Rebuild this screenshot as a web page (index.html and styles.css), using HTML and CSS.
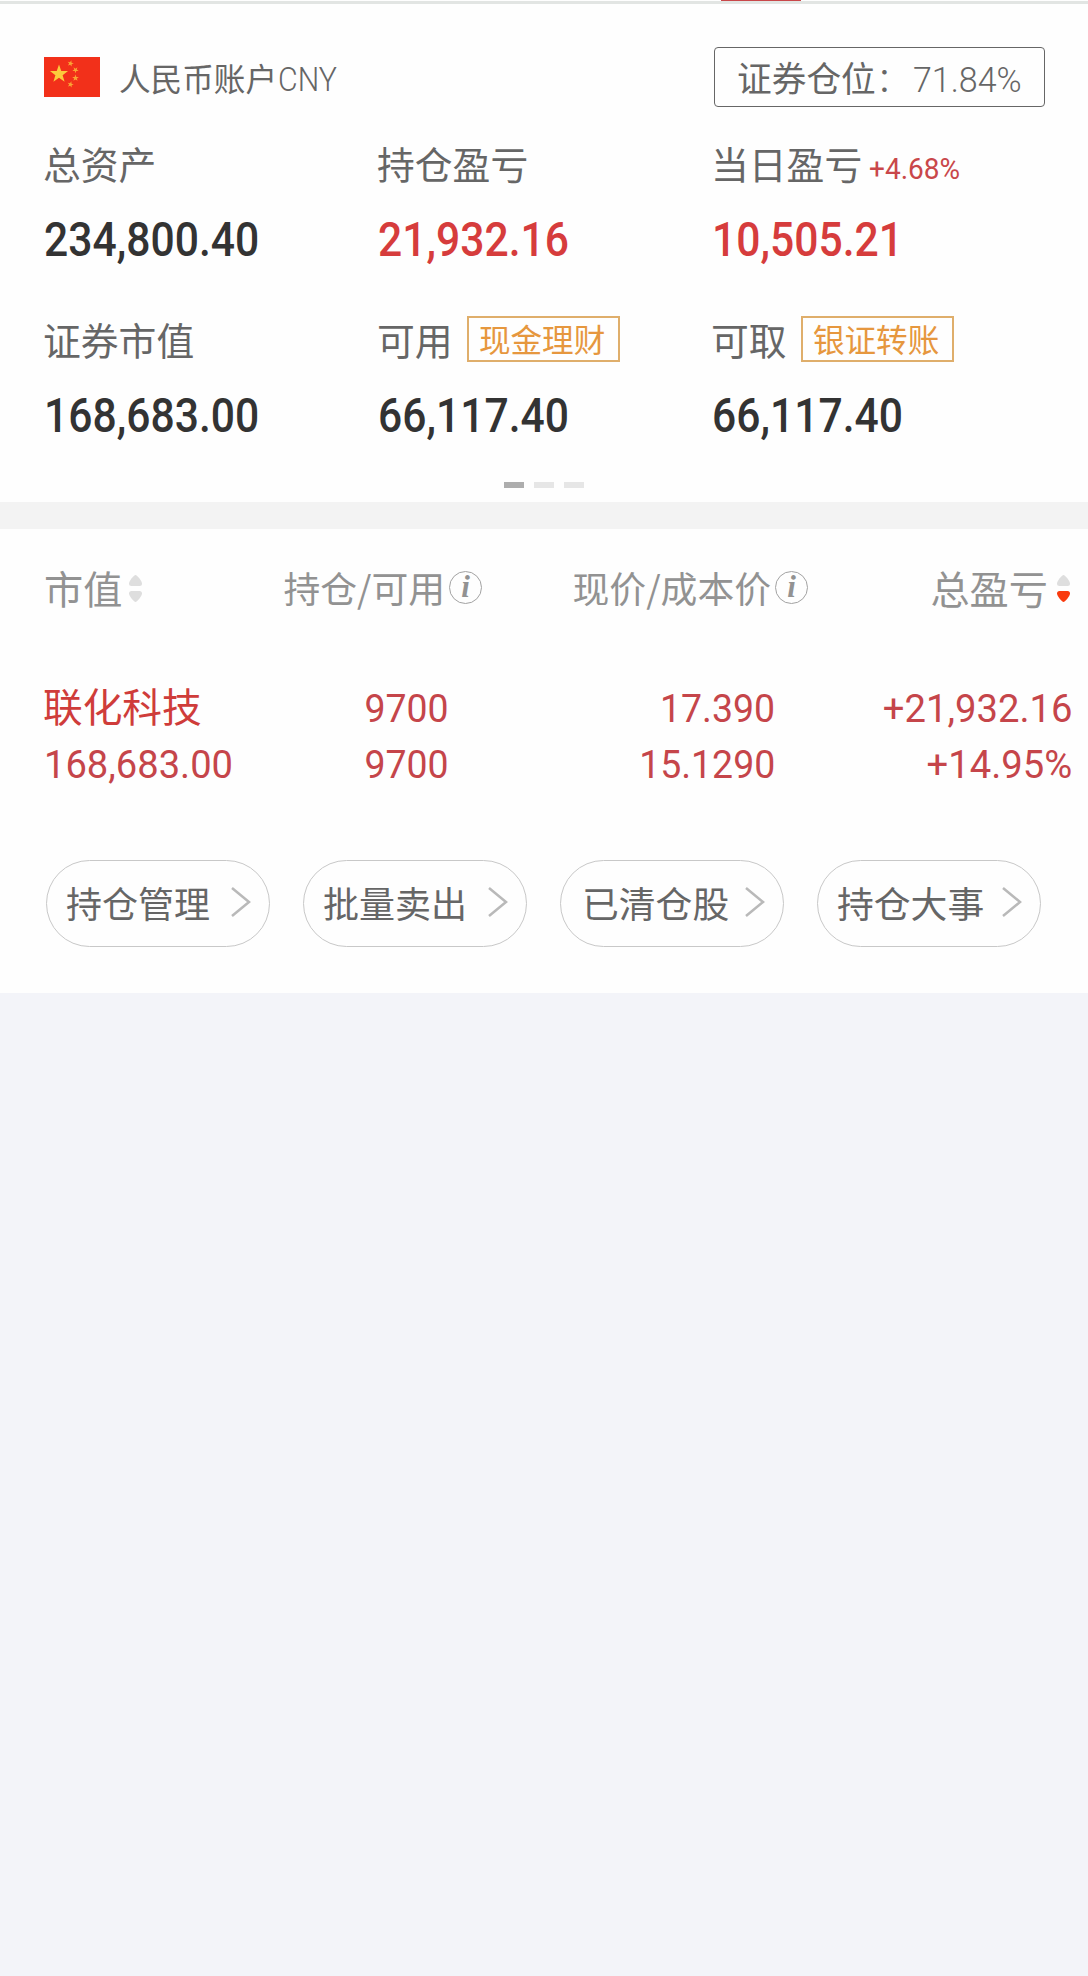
FILE: index.html
```html
<!DOCTYPE html>
<html lang="zh-CN">
<head>
<meta charset="utf-8">
<title>持仓</title>
<link rel="stylesheet" href="styles.css">
</head>
<body>
<div class="tabline"><span class="tabline-active"></span></div>

<section class="account">
  <header class="account-head">
    <svg class="flag" viewBox="0 0 56 40">
      <defs><path id="star" d="M0-10 2.4-3.1 9.5-3.1 3.8 1.2 5.9 8.1 0 4-5.9 8.1-3.8 1.2-9.5-3.1-2.4-3.1Z"/></defs>
      <rect width="56" height="40" fill="#f2301a"/>
      <g fill="#fccb3c">
        <use href="#star" transform="translate(15 17) scale(.95)"/>
        <g fill="#f9a535">
          <use href="#star" transform="translate(26.5 6.500) rotate(15) scale(.33)"/>
          <use href="#star" transform="translate(31.5 13) rotate(35) scale(.33)"/>
          <use href="#star" transform="translate(31.5 21) scale(.35)"/>
          <use href="#star" transform="translate(26.500 27.500) rotate(15) scale(.33)"/>
        </g>
      </g>
    </svg>
    <span class="account-name">人民币账户<span class="num cny">CNY</span></span>
    <span class="position">证券仓位<span class="colon">：</span><span class="num pct">71.84%</span></span>
  </header>

  <div class="stats">
    <div class="stat">
      <div class="label">总资产</div>
      <div class="value"><span class="num">234,800.40</span></div>
    </div>
    <div class="stat">
      <div class="label">持仓盈亏</div>
      <div class="value up"><span class="num">21,932.16</span></div>
    </div>
    <div class="stat">
      <div class="label">当日盈亏<span class="num change">+4.68%</span></div>
      <div class="value up"><span class="num">10,505.21</span></div>
    </div>
    <div class="stat">
      <div class="label">证券市值</div>
      <div class="value"><span class="num">168,683.00</span></div>
    </div>
    <div class="stat">
      <div class="label">可用<span class="tag">现金理财</span></div>
      <div class="value"><span class="num">66,117.40</span></div>
    </div>
    <div class="stat">
      <div class="label">可取<span class="tag">银证转账</span></div>
      <div class="value"><span class="num">66,117.40</span></div>
    </div>
  </div>

  <div class="pager"><i class="on"></i><i></i><i></i></div>
</section>

<section class="holdings">
  <div class="row head">
    <div class="c1">市值<svg class="sort" viewBox="0 0 13 28"><path d="M6.500 0C8 0 13 6 13 8.500Q13 11 10.500 11H2.500Q0 11 0 8.500C0 6 5 0 6.500 0Z" fill="#dedede"/><path d="M6.500 27C8 27 13 21 13 18.500Q13 16 10.500 16H2.500Q0 16 0 18.500C0 21 5 27 6.500 27Z" fill="#dedede"/></svg></div>
    <div class="c2">持仓/可用<span class="info">i</span></div>
    <div class="c3">现价/成本价<span class="info">i</span></div>
    <div class="c4">总盈亏<svg class="sort" viewBox="0 0 13 28"><path d="M6.500 0C8 0 13 6 13 8.500Q13 11 10.500 11H2.500Q0 11 0 8.500C0 6 5 0 6.500 0Z" fill="#dedede"/><path d="M6.500 27C8 27 13 21 13 18.500Q13 16 10.500 16H2.500Q0 16 0 18.500C0 21 5 27 6.500 27Z" fill="#f93a0e"/></svg></div>
  </div>

  <div class="row item">
    <div class="c1"><span class="name">联化科技</span><span class="num wide">168,683.00</span></div>
    <div class="c2"><span class="num">9700</span><span class="num">9700</span></div>
    <div class="c3"><span class="num">17.390</span><span class="num">15.1290</span></div>
    <div class="c4"><span class="num">+21,932.16</span><span class="num">+14.95%</span></div>
  </div>

  <nav class="actions">
    <a class="pill">持仓管理<svg class="chev" viewBox="0 0 20 30"><path d="M1 1 18 15 1 29"/></svg></a>
    <a class="pill">批量卖出<svg class="chev" viewBox="0 0 20 30"><path d="M1 1 18 15 1 29"/></svg></a>
    <a class="pill large">已清仓股<svg class="chev" viewBox="0 0 20 30"><path d="M1 1 18 15 1 29"/></svg></a>
    <a class="pill large">持仓大事<svg class="chev" viewBox="0 0 20 30"><path d="M1 1 18 15 1 29"/></svg></a>
  </nav>
</section>
</body>
</html>
```
FILE: styles.css
```css
* { box-sizing: border-box; }

body {
  margin: 0;
  min-height: 1976px;
  background: #f3f4f9;
  color: #666;
  font-family: "Noto Sans CJK SC", sans-serif;
  white-space: nowrap;
}

.num {
  display: inline-block;
  font-family: Roboto, "Noto Sans CJK SC", sans-serif;
  transform-origin: left center;
}

.tabline {
  height: 4px;
  padding-left: 721px;
  background: linear-gradient(#fefefe 1px, #e2e5e3 1px);
}
.tabline-active {
  display: block;
  width: 80px;
  height: 1px;
  background: #c9474a;
}

/* Account summary */
.account {
  height: 498px;
  padding: 43px 43px 0 44px;
  background: #fefefe;
}
.account-head {
  display: flex;
  align-items: center;
  height: 60px;
}
.flag { width: 56px; height: 40px; }
.account-name {
  margin-left: 19px;
  font-size: 31.6px;
  line-height: 58px;
}
.cny {
  margin-left: 1px;
  font-size: 32.4px;
  font-weight: 300;
  line-height: 40px;
  transform: scaleX(.935);
}
.position {
  width: 331px;
  height: 60px;
  margin-left: auto;
  padding-left: 22px;
  border: 1px solid #666;
  border-radius: 4px;
  font-size: 34.700px;
  line-height: 58px;
}
.colon {
  display: inline-block;
  width: 35px;
  font-weight: 300;
}
.pct {
  margin-left: 2px;
  font-size: 35.2px;
  font-weight: 300;
  line-height: 40px;
  transform: scaleX(.965);
}

.stats {
  display: grid;
  grid-template-columns: repeat(3, 334px);
  row-gap: 53px;
  margin: 34px 0 0 -1px;
}
.label {
  display: flex;
  align-items: center;
  height: 44px;
  font-size: 37.8px;
  line-height: 44px;
}
.change {
  margin: 11px 0 0 7px;
  color: #c9474a;
  font-size: 29.5px;
  line-height: 34px;
  transform: scaleX(.95);
}
.tag {
  width: 153px;
  height: 46px;
  margin-left: 14px;
  padding-right: 2px;
  border: 2px solid #dfae6b;
  color: #e6973e;
  font-size: 31.6px;
  line-height: 40px;
  text-align: center;
}
.value {
  height: 56px;
  margin-top: 23px;
  color: #333;
  font-size: 47.8px;
  font-weight: 500;
  line-height: 56px;
}
.value .num { transform: translateX(1px) scaleX(.892); }
.value.up { color: #d63c3c; }

.pager {
  display: flex;
  justify-content: center;
  gap: 10px;
  margin: 42px 2px 0 0;
}
.pager i {
  width: 20px;
  height: 6px;
  background: #e6e6e6;
}
.pager .on { background: #adadad; }

/* Holdings table */
.holdings {
  height: 491px;
  padding-top: 36px;
  border-top: 27px solid #f3f3f3;
  background: #fefefe;
}
.row {
  display: grid;
  grid-template-columns: 240px 242px 326px 262px;
}
.head {
  height: 44px;
  color: #929292;
  font-size: 36.8px;
  line-height: 44px;
}
.head > div {
  display: flex;
  justify-content: flex-end;
  align-items: center;
}
.head .c1 {
  justify-content: flex-start;
  padding-left: 44px;
}
.head .c1, .head .c4 { font-size: 39.2px; }
.sort {
  width: 13px;
  height: 28px;
  margin: 3px 0 0 7px;
}
.head .c4 .sort { margin-left: 9px; }
.info {
  width: 33px;
  height: 33px;
  margin: 0 0 0 4px;
  border: 1.500px solid #a2a2a2;
  border-radius: 50%;
  font: italic bold 31px/29px "Liberation Serif", serif;
  text-align: center;
}

.item {
  grid-template-columns: 240px 209px 326px 297px;
  margin-top: 72px;
  color: #c5454a;
  font-size: 39.4px;
}
.item > div {
  display: flex;
  flex-direction: column;
  align-items: flex-end;
}
.item .c1 {
  align-items: flex-start;
  padding-left: 44px;
}
.item .num, .name {
  height: 56px;
  line-height: 56px;
}
.item .num {
  transform: scaleX(.95);
  transform-origin: right center;
}
.item .c4 .num { transform: scaleX(.97); }
.name {
  margin: -4px 0 4px -1px;
  color: #cf3c3a;
  font-size: 39.700px;
}
.item .c1 .wide {
  transform: scaleX(.968);
  transform-origin: left center;
}

.actions {
  display: flex;
  gap: 33px;
  margin-top: 67px;
  padding-left: 46px;
}
.pill {
  display: flex;
  align-items: center;
  justify-content: space-between;
  width: 224px;
  height: 87px;
  padding: 0 18px 4px 19px;
  border: 1px solid #c8c8c8;
  border-radius: 44px;
  font-size: 36px;
}
.pill.large { padding-left: 21px; font-size: 36.8px; }
.pill.large:last-child { padding-left: 19px; }
.chev {
  width: 20px;
  height: 30px;
  fill: none;
  stroke: #b9b9b9;
  stroke-width: 2.5;
}
```
